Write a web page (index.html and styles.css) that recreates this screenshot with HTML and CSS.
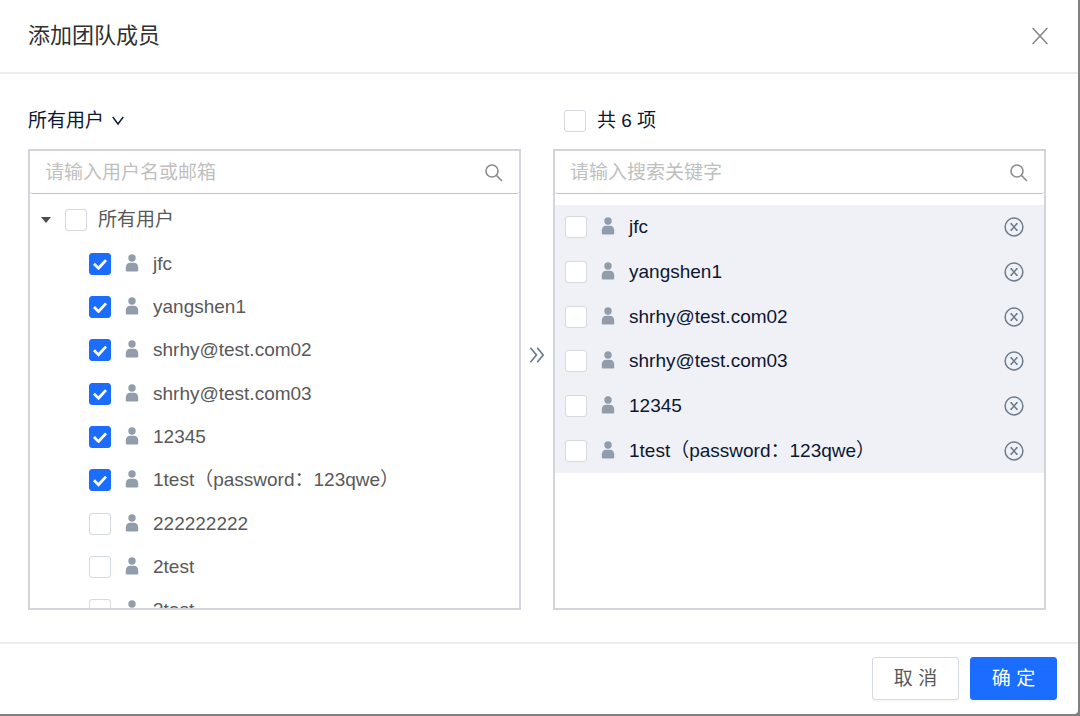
FILE: index.html
```html
<!DOCTYPE html>
<html lang="zh-CN">
<head>
    <meta charset="UTF-8">
    <meta name="viewport" content="width=device-width, initial-scale=1.0">
    <title>添加团队成员</title>
    <link rel="stylesheet" href="styles.css">
</head>
<body>
    <!-- shared icons -->
    <svg class="sprite" aria-hidden="true">
        <symbol id="icon-user" viewBox="0 0 14 18">
            <circle cx="7" cy="4" r="3.7"/>
            <path d="M0.8 16.2V13.4C0.8 10.6 2.6 8.8 5.2 8.8H8.8C11.4 8.8 13.2 10.6 13.2 13.4V16.2Q13.2 17.5 11.9 17.5H2.1Q0.8 17.5 0.8 16.2Z"/>
        </symbol>
        <symbol id="icon-search" viewBox="0 0 20 20">
            <circle cx="8" cy="8" r="6"/>
            <path d="M12.4 12.4L18 18"/>
        </symbol>
        <symbol id="icon-remove" viewBox="0 0 20 20">
            <circle cx="10" cy="10" r="8.9"/>
            <path d="M7.2 6.8L12.8 13.2M12.8 6.8L7.2 13.2"/>
            <path d="M6.4 6.8H8M12 6.8H13.6M6.4 13.2H8M12 13.2H13.6"/>
        </symbol>
    </svg>

    <div class="modal" role="dialog" aria-labelledby="modal-title">
        <div class="modal-header">
            <h1 id="modal-title">添加团队成员</h1>
            <button type="button" class="close" aria-label="关闭">
                <svg width="18" height="18" viewBox="0 0 18 18"><path d="M1.6 1L16.4 17M16.4 1L1.6 17"/></svg>
            </button>
        </div>

        <div class="modal-body">
            <section class="column">
                <div class="column-head">
                    <button type="button" class="group-select">
                        所有用户
                        <svg width="12" height="10" viewBox="0 0 12 10"><path d="M0.8 1L6 8L11.2 1"/></svg>
                    </button>
                </div>
                <div class="box">
                    <div class="search">
                        <input type="text" placeholder="请输入用户名或邮箱" aria-label="请输入用户名或邮箱">
                        <svg class="search-icon"><use href="#icon-search"/></svg>
                    </div>
                    <div class="tree">
                        <div class="tree-root">
                            <span class="caret"></span>
                            <label class="item"><input type="checkbox">所有用户</label>
                        </div>
                        <ul class="tree-list">
                            <li><label class="item"><input type="checkbox" checked><svg class="user"><use href="#icon-user"/></svg>jfc</label></li>
                            <li><label class="item"><input type="checkbox" checked><svg class="user"><use href="#icon-user"/></svg>yangshen1</label></li>
                            <li><label class="item"><input type="checkbox" checked><svg class="user"><use href="#icon-user"/></svg>shrhy@test.com02</label></li>
                            <li><label class="item"><input type="checkbox" checked><svg class="user"><use href="#icon-user"/></svg>shrhy@test.com03</label></li>
                            <li><label class="item"><input type="checkbox" checked><svg class="user"><use href="#icon-user"/></svg>12345</label></li>
                            <li><label class="item"><input type="checkbox" checked><svg class="user"><use href="#icon-user"/></svg>1test（password：123qwe）</label></li>
                            <li><label class="item"><input type="checkbox"><svg class="user"><use href="#icon-user"/></svg>222222222</label></li>
                            <li><label class="item"><input type="checkbox"><svg class="user"><use href="#icon-user"/></svg>2test</label></li>
                            <li><label class="item"><input type="checkbox"><svg class="user"><use href="#icon-user"/></svg>3test</label></li>
                        </ul>
                    </div>
                </div>
            </section>

            <div class="arrow">
                <svg width="16" height="16" viewBox="0 0 16 16"><path d="M1.4 0.8L7.4 8L1.4 15.2M8.2 0.8L14.2 8L8.2 15.2"/></svg>
            </div>

            <section class="column">
                <div class="column-head">
                    <label class="item count"><input type="checkbox">共 6 项</label>
                </div>
                <div class="box">
                    <div class="search">
                        <input type="text" placeholder="请输入搜索关键字" aria-label="请输入搜索关键字">
                        <svg class="search-icon"><use href="#icon-search"/></svg>
                    </div>
                    <ul class="picked">
                        <li><label class="item"><input type="checkbox"><svg class="user"><use href="#icon-user"/></svg>jfc</label><button type="button" class="remove" aria-label="移除"><svg><use href="#icon-remove"/></svg></button></li>
                        <li><label class="item"><input type="checkbox"><svg class="user"><use href="#icon-user"/></svg>yangshen1</label><button type="button" class="remove" aria-label="移除"><svg><use href="#icon-remove"/></svg></button></li>
                        <li><label class="item"><input type="checkbox"><svg class="user"><use href="#icon-user"/></svg>shrhy@test.com02</label><button type="button" class="remove" aria-label="移除"><svg><use href="#icon-remove"/></svg></button></li>
                        <li><label class="item"><input type="checkbox"><svg class="user"><use href="#icon-user"/></svg>shrhy@test.com03</label><button type="button" class="remove" aria-label="移除"><svg><use href="#icon-remove"/></svg></button></li>
                        <li><label class="item"><input type="checkbox"><svg class="user"><use href="#icon-user"/></svg>12345</label><button type="button" class="remove" aria-label="移除"><svg><use href="#icon-remove"/></svg></button></li>
                        <li><label class="item"><input type="checkbox"><svg class="user"><use href="#icon-user"/></svg>1test（password：123qwe）</label><button type="button" class="remove" aria-label="移除"><svg><use href="#icon-remove"/></svg></button></li>
                    </ul>
                </div>
            </section>
        </div>

        <div class="modal-footer">
            <button type="button" class="btn">取 消</button>
            <button type="button" class="btn btn-primary">确 定</button>
        </div>
    </div>
</body>
</html>
```

FILE: styles.css
```css
* {
    margin: 0;
    padding: 0;
    box-sizing: border-box;
}

body {
    font-family: "Liberation Sans", "Noto Sans CJK SC", sans-serif;
    font-size: 19px;
    line-height: 28px;
    color: #595959;
    background-color: #808080;
    padding: 0 2px 2px 0;
}

ul {
    list-style: none;
}

button,
input {
    font: inherit;
    color: inherit;
}

button {
    border: none;
    background: none;
    cursor: pointer;
}

svg {
    flex: none;
    fill: none;
    stroke: currentColor;
}

.sprite {
    display: none;
}

.modal {
    background-color: #fff;
    border-radius: 0 0 4px 0;
}

.modal-header {
    display: flex;
    align-items: center;
    justify-content: space-between;
    height: 74px;
    padding: 0 29px 0 28px;
    border-bottom: 2px solid #ededed;
}

.modal-header h1 {
    font-size: 22px;
    font-weight: normal;
    color: #303030;
}

.close {
    display: flex;
    color: #8c8c8c;
}

.close svg {
    stroke-width: 1.7;
}

.modal-body {
    display: flex;
    padding: 26px 32px 32px 28px;
}

.column {
    flex: 1;
    min-width: 0;
}

.column-head {
    height: 49px;
    padding-bottom: 7px;
    display: flex;
    align-items: center;
    color: #0c1733;
}

.group-select {
    display: flex;
    align-items: center;
    gap: 8px;
}

.group-select svg {
    stroke-width: 1.4;
}

.arrow {
    width: 32px;
    display: flex;
    align-items: center;
    justify-content: center;
    color: #6b7c8f;
}

.arrow svg {
    stroke-width: 1.7;
}

.box {
    height: 461px;
    border: 2px solid #d2d6dc;
    overflow: hidden;
}

.search {
    display: flex;
    align-items: center;
    height: 43px;
    padding: 2px 15px 0;
    border-bottom: 1px solid #bcc5cd;
    border-radius: 0 0 3px 3px;
}

.search input {
    flex: 1;
    min-width: 0;
    border: none;
    outline: none;
    background: transparent;
}

.search input::placeholder {
    color: #bfbfbf;
}

.search-icon {
    width: 20px;
    height: 20px;
    color: #8c8c8c;
    stroke-width: 1.6;
}

/* checkbox + icon + name */
.item {
    display: flex;
    align-items: center;
    cursor: pointer;
}

.item input {
    appearance: none;
    flex: none;
    width: 22px;
    height: 22px;
    margin-right: 11px;
    border: 1px solid #d5d9e0;
    border-radius: 3px;
    background-color: #fff;
    display: grid;
    place-content: center;
}

.item input:checked {
    padding-top: 2px;
    border-color: #1a6dff;
    background-color: #1a6dff;
}

.item input:checked::after {
    content: "";
    width: 14px;
    height: 11px;
    background-color: #fff;
    clip-path: polygon(0 50%, 14% 32%, 38% 64%, 86% 0, 100% 16%, 40% 100%);
}

.user {
    width: 14px;
    height: 18px;
    margin: 0 14px 2px 3px;
    fill: #929dab;
    stroke: none;
}

.count {
    padding-left: 11px;
}

.tree-root {
    display: flex;
    align-items: center;
    gap: 14px;
    height: 48px;
    padding: 4px 0 0 11px;
}

.caret {
    border: 5px solid transparent;
    border-top: 6px solid #4d4d4d;
    border-bottom: none;
}

/* nine users share the list height evenly */
.tree-list {
    display: grid;
    grid-auto-rows: 1fr;
    height: 390px;
    padding-left: 59px;
}

.tree-list li {
    display: flex;
    align-items: center;
}

.picked {
    display: grid;
    grid-auto-rows: 1fr;
    height: 268px;
    margin-top: 11px;
    background-color: #f0f1f6;
    color: #0c1733;
}

.picked li {
    display: flex;
    align-items: center;
    justify-content: space-between;
    padding: 0 20px 0 10px;
}

.remove {
    display: flex;
    color: #6b7c8f;
}

.remove svg {
    width: 20px;
    height: 20px;
    stroke-width: 1.5;
}

.modal-footer {
    display: flex;
    justify-content: flex-end;
    gap: 11px;
    padding: 13px 21px 14px;
    border-top: 2px solid #ededed;
}

.btn {
    width: 87px;
    height: 43px;
    border: 1px solid #d5d9e0;
    border-radius: 3px;
    background-color: #fff;
    box-shadow: 0 2px 1px rgba(0, 0, 0, 0.03);
}

.btn-primary {
    border-color: #1a6dff;
    background-color: #1a6dff;
    color: #fff;
}
```
